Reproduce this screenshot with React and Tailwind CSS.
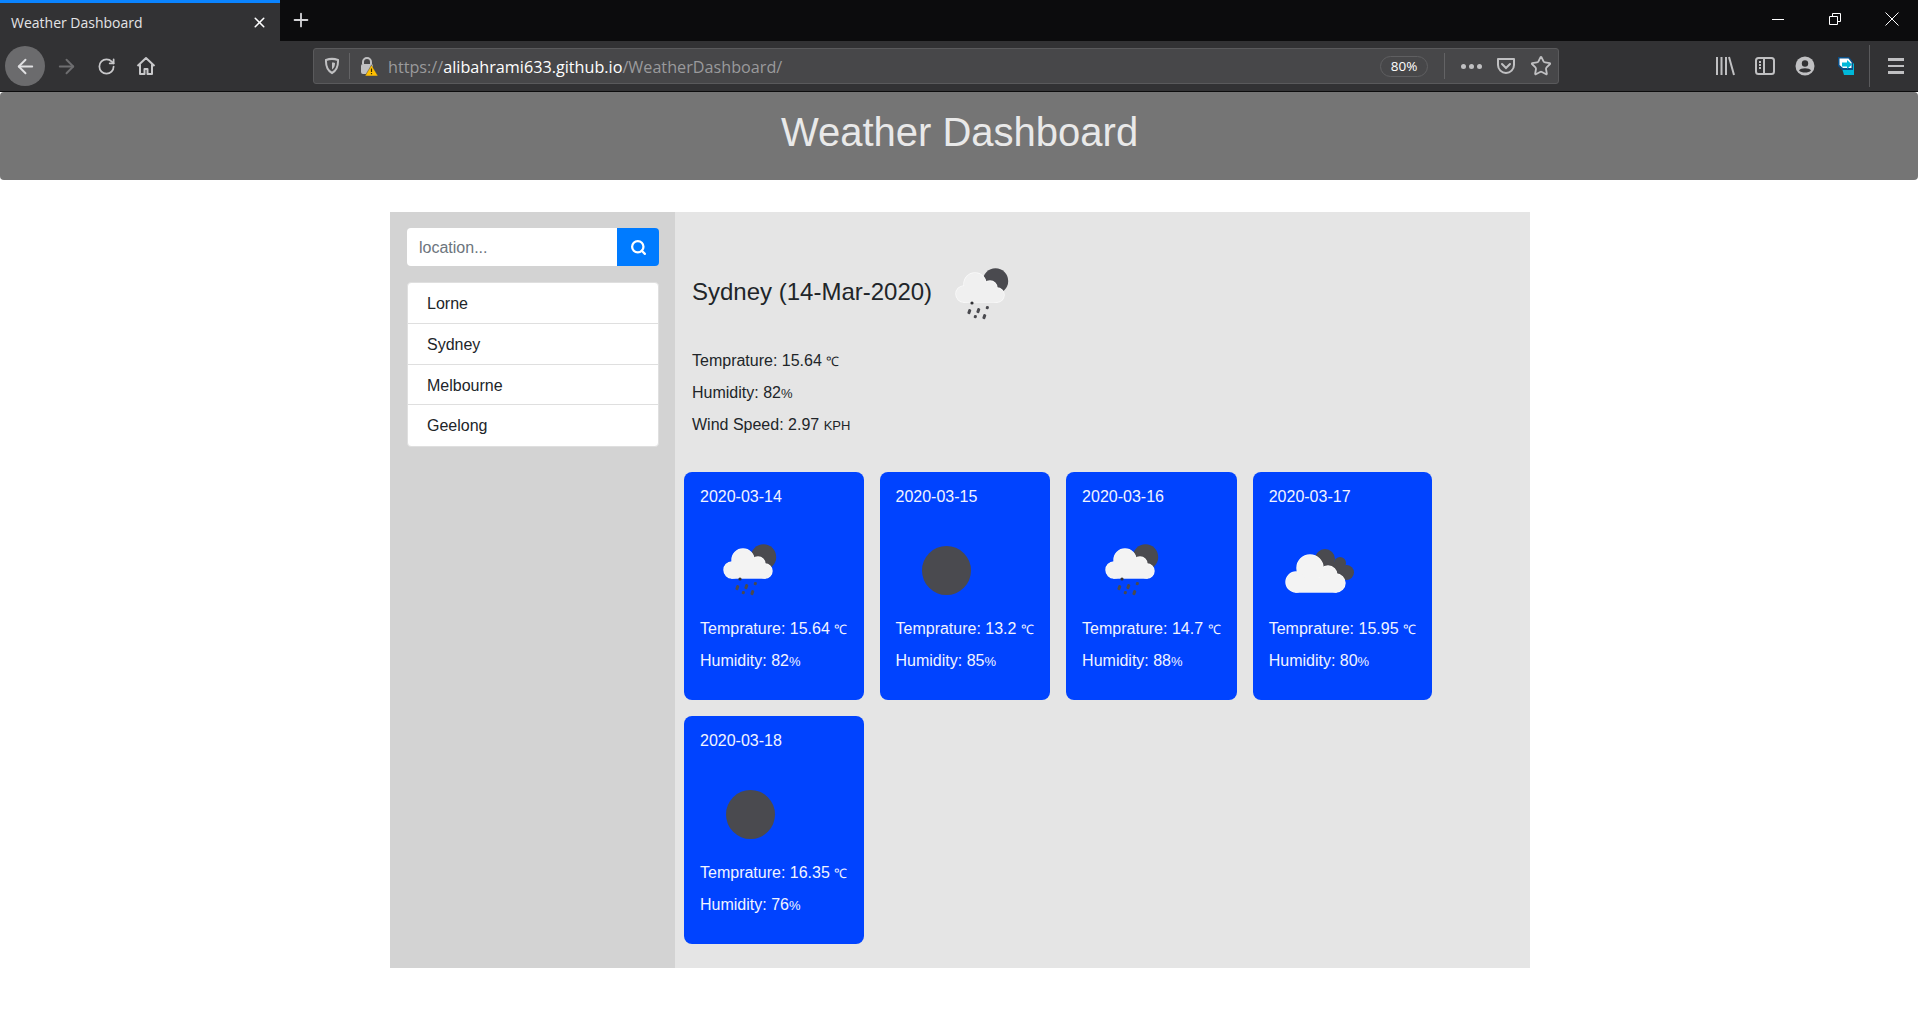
import { ArrowLeft, ArrowRight, RotateCw, Star, Search, X, Plus } from "lucide-react";

const CITIES = ["Lorne", "Sydney", "Melbourne", "Geelong"];

const FORECAST = [
  { date: "2020-03-14", icon: "rain", temp: "15.64", humidity: "82" },
  { date: "2020-03-15", icon: "overcast", temp: "13.2", humidity: "85" },
  { date: "2020-03-16", icon: "rain", temp: "14.7", humidity: "88" },
  { date: "2020-03-17", icon: "broken", temp: "15.95", humidity: "80" },
  { date: "2020-03-18", icon: "overcast", temp: "16.35", humidity: "76" },
];

const CLOUD_SMALL = [
  [43, 40, 11],
  [58, 44, 7],
  [32, 50, 8],
  [65, 51, 7],
];

const CLOUD_BIG = [
  [41, 48, 13],
  [59, 55, 9],
  [27, 62, 10],
  [67, 63, 9],
];

function Cloud({ lobes, bar, fill }) {
  const shapes = (
    <>
      {lobes.map(([cx, cy, r], i) => (
        <circle key={i} cx={cx} cy={cy} r={r} />
      ))}
      <rect x={bar[0]} y={bar[1]} width={bar[2]} height={bar[3]} />
    </>
  );
  return (
    <>
      <g fill="#fafafa" stroke="#fafafa" strokeWidth="1.4">{shapes}</g>
      <g fill={fill}>{shapes}</g>
    </>
  );
}

function WeatherIcon({ type, cloud = "#f3f3f3" }) {
  return (
    <svg viewBox="0 0 100 100" className="w-[100px] h-[100px] shrink-0">
      {type === "overcast" && <circle cx="50.5" cy="50.5" r="24.5" fill="#4a4a4f" />}
      {type === "rain" && (
        <>
          <circle cx="63.5" cy="37" r="12.7" fill="#4a4a4f" />
          <Cloud lobes={CLOUD_SMALL} bar={[32, 46, 33, 12]} fill={cloud} />
          <circle cx="40" cy="59" r="1.6" fill="#333336" />
          <g fill="#4a4a4f">
            <rect x="36" y="65" width="3" height="5" rx="1" transform="rotate(18 37 67)" />
            <rect x="45" y="64" width="3" height="5" rx="1" transform="rotate(18 46 66)" />
            <rect x="54" y="62" width="3" height="3" rx="1" transform="rotate(18 55 63)" />
            <rect x="42" y="71" width="3" height="3" rx="1" transform="rotate(18 43 72)" />
            <rect x="51" y="70" width="3" height="5" rx="1" transform="rotate(18 52 72)" />
          </g>
        </>
      )}
      {type === "broken" && (
        <>
          <g fill="#4a4a4f">
            <circle cx="56" cy="39" r="10" />
            <circle cx="71" cy="43" r="6" />
            <circle cx="77.5" cy="52.5" r="7.5" />
            <rect x="56" y="42" width="20" height="16" />
          </g>
          <Cloud lobes={CLOUD_BIG} bar={[27, 58, 40, 14]} fill={cloud} />
        </>
      )}
    </svg>
  );
}

function ToolbarButton({ children, className = "" }) {
  return <div className={`w-10 h-10 flex items-center justify-center shrink-0 ${className}`}>{children}</div>;
}

function BrowserChrome() {
  return (
    <div className="font-['Open_Sans',sans-serif]">
      <div className="h-[41px] bg-[#0c0c0d] flex">
        <div className="w-[280px] bg-[#323234] border-t-[3px] border-[#0a84ff] flex items-center pl-[11px] pr-3 justify-between">
          <span className="text-[14px] text-[#e4e4e6]">Weather Dashboard</span>
          <X size={17} strokeWidth={2.2} className="text-white" />
        </div>
        <Plus size={22} strokeWidth={2} className="text-[#d4d4d6] ml-[10px] mt-[9px]" />
        <div className="ml-auto flex items-start text-white pt-[10px]">
          <svg viewBox="0 0 18 18" className="w-[18px] h-[18px] mr-[39px]" fill="none" stroke="currentColor">
            <path d="M3 9.5h12" />
          </svg>
          <svg viewBox="0 0 18 18" className="w-[18px] h-[18px] mr-[39px]" fill="none" stroke="currentColor">
            <path d="M3.5 6.5h8v8h-8zM6.5 6.5v-3h8v8h-3" />
          </svg>
          <svg viewBox="0 0 18 18" className="w-[18px] h-[18px] mr-[17px]" fill="none" stroke="currentColor">
            <path d="M2.5 2.5l13 13M15.5 2.5l-13 13" />
          </svg>
        </div>
      </div>
      <div className="h-[51px] bg-[#323234] border-b border-[#0c0c0d] flex items-center pl-[5px]">
        <ToolbarButton className="rounded-full bg-[#6b6b6d] text-[#e0e0e2]">
          <ArrowLeft size={23} strokeWidth={2} />
        </ToolbarButton>
        <ToolbarButton className="ml-px text-[#6e6e70]">
          <ArrowRight size={23} strokeWidth={2} />
        </ToolbarButton>
        <ToolbarButton className="text-[#c8c8ca]">
          <RotateCw size={19} strokeWidth={2.2} />
        </ToolbarButton>
        <ToolbarButton className="text-[#c8c8ca]">
          <svg viewBox="0 0 20 20" className="w-5 h-5" fill="none" stroke="currentColor" strokeWidth="2" strokeLinejoin="round">
            <path d="M1.5 10L10 2l8.500 8M4 8.500V18h4.500v-5h3v5H16V8.500" />
          </svg>
        </ToolbarButton>
        <div className="ml-[147px] w-[1246px] h-9 bg-[#474749] border border-[#5a5a5c] rounded-[3px] flex items-center shrink-0 pr-[6px]">
          <svg viewBox="0 0 16 18" className="w-4 h-[18px] ml-[10px] text-[#c0c0c2]" fill="none" stroke="currentColor" strokeWidth="2">
            <path d="M2 3c4-1.500 8-1.500 12 0 .3 6-1.300 10.500-6 13C3.300 13.500 1.700 9 2 3z" />
            <path d="M8 5.500c1 0 2 .1 3 .4 0 3-.8 5-3 6.500z" fill="currentColor" stroke="none" />
          </svg>
          <div className="w-px h-[26px] bg-[#636365] ml-[9px]" />
          <svg viewBox="0 0 20 20" className="w-5 h-5 ml-2">
            <path d="M5 8V6a4 4 0 0 1 8 0v2" fill="none" stroke="#c0c0c2" strokeWidth="2" />
            <rect x="3" y="8" width="12" height="10" rx="2" fill="#c0c0c2" />
            <path d="M13.500 9L20 20H7z" fill="#ffbf00" stroke="#474749" strokeWidth="0.5" />
            <path d="M13.500 12.500v3.500M13.500 17v1.300" stroke="#3a2d00" strokeWidth="1.200" />
          </svg>
          <span className="ml-[10px] mt-[3px] text-[16.2px] text-[#9a9a9c] whitespace-nowrap">
            https://<span className="text-white">alibahrami633.github.io</span>/WeatherDashboard/
          </span>
          <div className="ml-auto w-[48px] h-[21px] rounded-full border border-[#5f5f61] flex items-center justify-center text-[13.5px] text-white">
            80%
          </div>
          <div className="w-px h-[26px] bg-[#636365] ml-4" />
          <div className="flex gap-[3px] ml-4 w-[21px]">
            <div className="w-[5px] h-[5px] rounded-full bg-[#c0c0c2]" />
            <div className="w-[5px] h-[5px] rounded-full bg-[#c0c0c2]" />
            <div className="w-[5px] h-[5px] rounded-full bg-[#c0c0c2]" />
          </div>
          <svg viewBox="0 0 20 20" className="w-5 h-5 ml-[14px] text-[#c0c0c2]" fill="none" stroke="currentColor" strokeWidth="2">
            <path d="M2 3h16v6a8 8 0 0 1-16 0z" strokeLinejoin="round" />
            <path d="M6 8l4 4 4-4" strokeLinecap="round" />
          </svg>
          <Star size={22} strokeWidth={2} className="text-[#c0c0c2] ml-[14px]" />
        </div>
        <ToolbarButton className="ml-[146px] text-[#c0c0c2]">
          <svg viewBox="0 0 20 20" className="w-5 h-5" fill="none" stroke="currentColor" strokeWidth="2">
            <path d="M2 1v18M6.500 1v18M11 1v18M14 1l5 18" />
          </svg>
        </ToolbarButton>
        <ToolbarButton className="text-[#c0c0c2]">
          <svg viewBox="0 0 20 20" className="w-5 h-5" fill="none" stroke="currentColor" strokeWidth="2">
            <rect x="1" y="2" width="18" height="16" rx="2.500" />
            <path d="M9 2v16M4 6h2M4 9h2M4 12h2" />
          </svg>
        </ToolbarButton>
        <ToolbarButton className="text-[#c0c0c2]">
          <svg viewBox="0 0 20 20" className="w-5 h-5">
            <circle cx="10" cy="10" r="9.500" fill="currentColor" />
            <circle cx="10" cy="7.500" r="3.200" fill="#323234" />
            <path d="M4 14.500c1.500-3 10.500-3 12 0-2.500 2.700-9.500 2.700-12 0z" fill="#323234" />
          </svg>
        </ToolbarButton>
        <ToolbarButton className="ml-px">
          <svg viewBox="0 0 20 20" className="w-5 h-5">
            <path d="M3 2h10l5 6v11H8z" fill="#00b8d9" />
            <path d="M2 1h11l4 5v8H6L2 10z" fill="#0b4f86" />
            <path d="M3.500 2.500h9l3 4v5.500H7l-3.500-3z" fill="#ffffff" />
            <path d="M6 6.500h5V4l5 4.500-5 4.500v-2.500H6z" fill="#00b8d9" />
          </svg>
        </ToolbarButton>
        <div className="w-px h-[42px] bg-[#5a5a5c] ml-[3px]" />
        <div className="ml-[18px] w-4 flex flex-col gap-[4px]">
          <div className="h-[2.500px] bg-[#c0c0c2]" />
          <div className="h-[2.500px] bg-[#c0c0c2]" />
          <div className="h-[2.500px] bg-[#c0c0c2]" />
        </div>
      </div>
    </div>
  );
}

function ForecastCard({ day }) {
  return (
    <div className="bg-[#0043ff] text-[#f2f4ff] rounded-[8px] pt-[13px] pl-4 pr-[16.2px] h-[228px] flex flex-col">
      <div className="h-6 leading-6">{day.date}</div>
      <div className="mt-[11px] h-[97px]">
        <WeatherIcon type={day.icon} />
      </div>
      <div className="h-6 leading-6 whitespace-nowrap">
        Temprature: {day.temp} <small className="text-[13px] leading-none">℃</small>
      </div>
      <div className="mt-2 h-6 leading-6 whitespace-nowrap">
        Humidity: {day.humidity}
        <small className="text-[13px] leading-none">%</small>
      </div>
    </div>
  );
}

export default function App() {
  return (
    <div className="font-['Liberation_Sans',Arial,sans-serif] text-[16px] text-[#212529] bg-white min-h-[1024px] overflow-hidden">
      <BrowserChrome />
      <header className="h-[88px] bg-[#757575] rounded-[4px] flex justify-center pt-[16px] pl-px">
        <h1 className="text-[40px] leading-[48px] text-[#e9e9e9]">Weather Dashboard</h1>
      </header>
      <div className="w-[1140px] h-[756px] ml-[390px] mt-8 flex">
        <aside className="w-[285px] bg-[#d3d3d3] pt-4 pl-[17px] pr-4 shrink-0">
          <div className="flex h-[38px]">
            <div className="flex-1 bg-white rounded-l-[4px] pl-3 text-[16px] leading-[39px] text-[#6c757d]">location...</div>
            <div className="w-[42px] bg-[#007bff] rounded-r-[4px] flex items-center justify-center text-white">
              <Search size={17} strokeWidth={3.2} />
            </div>
          </div>
          <ul className="mt-4 bg-white rounded-[4px] border border-[#dfdfdf] divide-y divide-[#dfdfdf]">
            {CITIES.map((city) => (
              <li key={city} className="h-[40.75px] leading-[42px] pl-[19px]">
                {city}
              </li>
            ))}
          </ul>
        </aside>
        <main className="flex-1 bg-[#e5e5e5] pt-8">
          <div className="pl-[17px] flex items-center h-[100px]">
            <h2 className="text-[24px] leading-[28px] -mt-1">Sydney (14-Mar-2020)</h2>
            <WeatherIcon type="rain" cloud="#f0f0f0" />
          </div>
          <div className="pl-[17px] mt-[5px] flex flex-col gap-2 leading-6">
            <p>
              Temprature: 15.64 <small className="text-[13px] leading-none">℃</small>
            </p>
            <p>
              Humidity: 82<small className="text-[13px] leading-none">%</small>
            </p>
            <p>
              Wind Speed: 2.97 <small className="text-[13px] leading-none">KPH</small>
            </p>
          </div>
          <div className="mt-[35px] pl-[9px] flex flex-wrap gap-4">
            {FORECAST.map((day) => (
              <ForecastCard key={day.date} day={day} />
            ))}
          </div>
        </main>
      </div>
    </div>
  );
}
